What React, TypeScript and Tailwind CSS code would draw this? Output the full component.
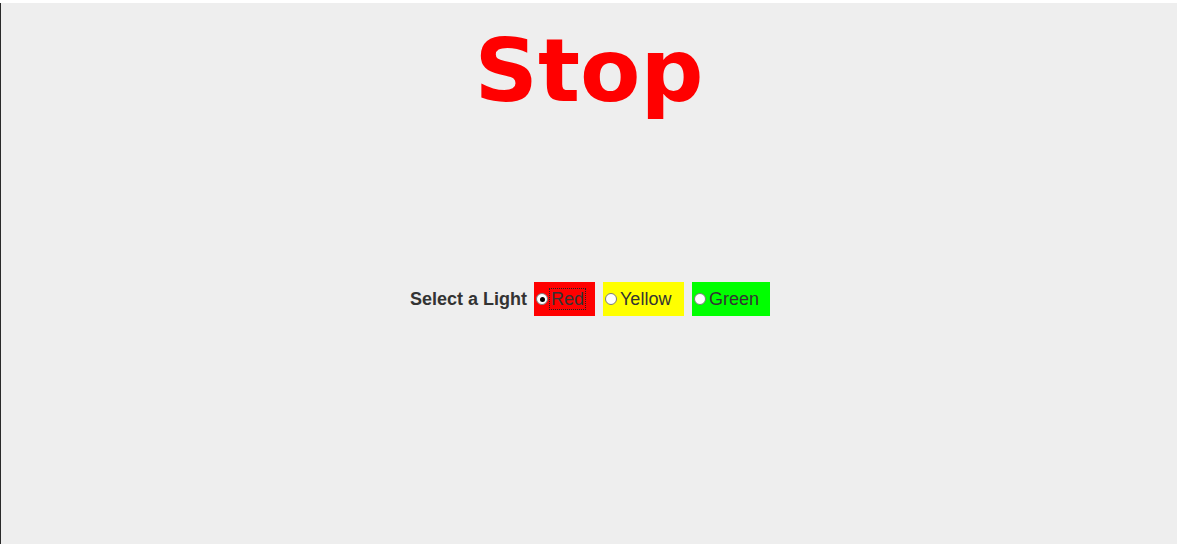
import React, { useState } from "react";

function Radio({ checked }: { checked: boolean }) {
  return (
    <span className="relative inline-flex h-[12px] w-[12px] shrink-0 items-center justify-center rounded-full border border-[#7a7a7a] bg-white">
      {checked && <span className="h-[5px] w-[5px] rounded-full bg-black" />}
    </span>
  );
}

export default function App() {
  const [sel, setSel] = useState("Red");
  const opts = [
    { name: "Red", bg: "bg-[#ff0000]", w: "w-[61px]" },
    { name: "Yellow", bg: "bg-[#ffff00]", w: "w-[81px]" },
    { name: "Green", bg: "bg-[#00ff00]", w: "w-[78px]" },
  ];
  return (
    <div className="h-[544px] w-[1177px] overflow-hidden bg-white pt-[3px]">
      <div className="flex h-[541px] flex-col items-center border-l border-[#2a2a2a] bg-[#eeeeee]">
        <div
          className="mt-[16px] text-[88px] font-bold leading-[104px] text-[#ff0000]"
          style={{ fontFamily: '"DejaVu Sans", sans-serif' }}
        >
          Stop
        </div>
        <div
          className="mt-[159px] ml-[2px] flex items-center text-[18px] text-[#333333]"
          style={{ fontFamily: '"Liberation Sans", Arial, sans-serif' }}
        >
          <span className="mr-[7px] font-bold">Select a Light</span>
          {opts.map((o, i) => (
            <button
              key={o.name}
              onClick={() => setSel(o.name)}
              className={`flex h-[34px] items-center pl-[2px] ${o.bg} ${o.w} ${i < 2 ? "mr-[8px]" : ""}`}
            >
              <Radio checked={sel === o.name} />
              <span
                className={`ml-[1px] border px-[1px] leading-[20px] ${sel === o.name ? "border-dotted border-[#222]" : "border-transparent"}`}
              >
                {o.name}
              </span>
            </button>
          ))}
        </div>
      </div>
    </div>
  );
}
